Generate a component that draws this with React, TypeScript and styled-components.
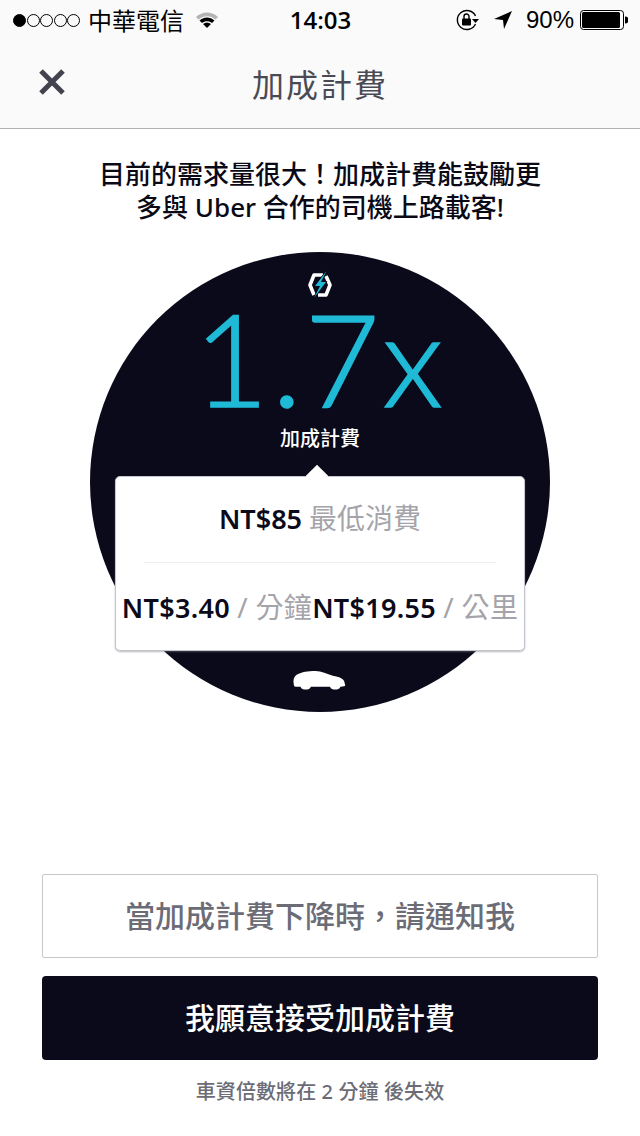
import React from "react";
import styled, { createGlobalStyle } from "styled-components";

const CJK = `"Noto Sans CJK TC", "Noto Sans", sans-serif`;
const LATIN = `"Noto Sans", "Noto Sans CJK TC", sans-serif`;

const Global = createGlobalStyle`
  html, body { margin: 0; padding: 0; background: #fff; }
  body { font-family: ${LATIN}; }
`;

const Page = styled.div`
  width: 640px;
  height: 1136px;
  display: flex;
  flex-direction: column;
  align-items: center;
  overflow: hidden;
  background: #fff;
`;

const Header = styled.header`
  width: 100%;
  height: 129px;
  flex: none;
  box-sizing: border-box;
  background: #fafafa;
  border-bottom: 1px solid #b2b2b2;
  display: flex;
  flex-direction: column;
`;

const StatusBar = styled.div`
  height: 40px;
  padding: 0 12px 0 13px;
  display: grid;
  grid-template-columns: 1fr auto 1fr;
  align-items: center;
  color: #000;
`;

const StatusLeft = styled.div`
  display: flex;
  align-items: center;
`;

const Dots = styled.div`
  display: flex;
  gap: 0.5px;
  margin-right: 8px;
`;

const Dot = styled.span<{ $on?: boolean }>`
  width: 13px;
  height: 13px;
  box-sizing: border-box;
  border-radius: 50%;
  border: 1px solid #000;
  background: ${(p) => (p.$on ? "#000" : "transparent")};
`;

const Carrier = styled.span`
  font: 400 24px/1 ${CJK};
  margin-right: 11px;
`;

const Clock = styled.span`
  font: 600 24px/1 "Open Sans", sans-serif;
`;

const StatusRight = styled.div`
  display: flex;
  align-items: center;
  justify-content: flex-end;
`;

const Percent = styled.span`
  font: 400 24px/1 "Liberation Sans", sans-serif;
  margin: 0 6px 0 13px;
`;

const NavBar = styled.div`
  flex: 1;
  position: relative;
  display: flex;
  align-items: center;
  justify-content: center;
  padding-bottom: 3px;
`;

const CloseButton = styled.div`
  position: absolute;
  left: 38px;
  top: 28px;
  width: 28px;
  height: 28px;
  display: block;
`;

const NavTitle = styled.h1`
  margin: 0;
  font: 400 32px/1 ${CJK};
  letter-spacing: 2px;
  color: #4a4a55;
`;

const Lead = styled.p`
  margin: 29px 0 0;
  width: 480px;
  flex: none;
  text-align: center;
  font: 500 26px/33px ${LATIN};
  color: #0a0a17;
`;

const Disc = styled.section`
  position: relative;
  margin-top: 28px;
  width: 460px;
  height: 460px;
  border-radius: 50%;
  background: #0a0a1a;
  display: flex;
  flex-direction: column;
  align-items: center;
  flex: none;
`;

const SurgeIcon = styled.svg`
  margin-top: 17px;
  width: 26px;
  height: 30px;
  flex: none;
`;

const Multiplier = styled.div`
  margin-top: 8px;
  height: 100px;
  font: 300 129px/100px Lato, sans-serif;
  letter-spacing: 3px;
  color: #1fbad6;
  -webkit-text-stroke: 1.6px #1fbad6;
`;

const DiscLabel = styled.div`
  margin-top: 18px;
  font: 500 20px/26px ${CJK};
  color: #fff;
`;

const Card = styled.div`
  position: absolute;
  left: 25px;
  top: 224px;
  width: 410px;
  height: 175px;
  box-sizing: border-box;
  background: #fff;
  border: 1px solid #c4c5cc;
  border-radius: 5px;
  box-shadow: 0 1px 2px rgba(120, 120, 130, 0.5);
  display: flex;
  flex-direction: column;
  align-items: center;
  &::before {
    content: "";
    position: absolute;
    left: 193px;
    top: -9px;
    width: 16px;
    height: 16px;
    background: #fff;
    transform: rotate(45deg);
  }
`;

const MinRow = styled.div`
  position: relative;
  margin-top: 21px;
  height: 40px;
  font: 600 27px/40px ${LATIN};
  color: #0a0a1a;
`;

const Muted = styled.span`
  font-size: 28px;
  font-weight: 400;
  color: #a4a4aa;
`;

const Divider = styled.hr`
  width: 352px;
  height: 1px;
  border: 0;
  margin: 24px 0 0;
  background: #eeeeef;
`;

const RatesRow = styled.div`
  margin-top: 24px;
  height: 40px;
  display: flex;
  font: 600 27px/40px ${LATIN};
  letter-spacing: 0.3px;
  color: #0a0a1a;
  white-space: nowrap;
`;

const Car = styled.svg`
  position: absolute;
  left: 202px;
  top: 418px;
  width: 55px;
  height: 20px;
`;

const Spacer = styled.div`
  flex: 1;
`;

const NotifyButton = styled.div`
  width: 556px;
  height: 84px;
  flex: none;
  box-sizing: border-box;
  border: 1px solid #c8c8cc;
  border-radius: 2px;
  padding-bottom: 4px;
  display: flex;
  align-items: center;
  justify-content: center;
  font: 500 30px/1 ${CJK};
  color: #6c6c76;
`;

const AcceptButton = styled.div`
  margin-top: 18px;
  width: 556px;
  height: 84px;
  flex: none;
  box-sizing: border-box;
  border-radius: 4px;
  padding-bottom: 4px;
  background: #0a0a1a;
  display: flex;
  align-items: center;
  justify-content: center;
  font: 500 30px/1 ${CJK};
  color: #fff;
`;

const Expiry = styled.div`
  margin: 20px 0 32px;
  height: 24px;
  flex: none;
  font: 500 20px/24px ${LATIN};
  letter-spacing: 0.1px;
  color: #6c6c76;
`;

export default function App() {
  return (
    <Page>
      <Global />
      <Header>
        <StatusBar>
          <StatusLeft>
            <Dots>
              <Dot $on />
              <Dot />
              <Dot />
              <Dot />
              <Dot />
            </Dots>
            <Carrier>中華電信</Carrier>
            <svg width="24" height="18" viewBox="0 0 24 18">
              <path d="M1 6 C7 0 17 0 23 6 L20.5 8.5 C15.5 4 8.5 4 3.5 8.5 Z" fill="#b4b4b4" />
              <path d="M4.5 9.5 C9 5.5 15 5.5 19.5 9.5 L17 12 C14 9.5 10 9.5 7 12 Z" fill="#000" />
              <path d="M8 13 C10.5 11 13.5 11 16 13 L12 17 Z" fill="#000" />
            </svg>
          </StatusLeft>
          <Clock>14:03</Clock>
          <StatusRight>
            <svg width="24" height="22" viewBox="0 0 24 22">
              <path d="M19.5 7 A9.5 9.5 0 1 0 19.5 15" fill="none" stroke="#000" strokeWidth="1.4" />
              <path d="M16 10 L23 10 L19.5 14 Z" fill="#000" />
              <rect x="6" y="9.5" width="9" height="7" rx="1" fill="#000" />
              <path d="M8 10 V7.5 a2.5 2.5 0 0 1 5 0 V10" fill="none" stroke="#000" strokeWidth="1.4" />
            </svg>
            <svg width="20" height="20" viewBox="0 0 20 20" style={{ marginLeft: 13 }}>
              <path d="M19 1 L1 9 L10 10 L11 19 Z" fill="#000" />
            </svg>
            <Percent>90%</Percent>
            <svg width="48" height="20" viewBox="0 0 48 20">
              <rect x="0.5" y="0.5" width="43" height="19" rx="3" fill="none" stroke="#000" />
              <rect x="2" y="2" width="38" height="16" rx="1.5" fill="#000" />
              <path d="M45 6.5 a3.5 3.5 0 0 1 0 7 Z" fill="#000" />
            </svg>
          </StatusRight>
        </StatusBar>
        <NavBar>
          <CloseButton>
            <svg width="28" height="28" viewBox="0 0 28 28">
              <path d="M3 3 L25 25 M25 3 L3 25" stroke="#43434f" strokeWidth="5" fill="none" />
            </svg>
          </CloseButton>
          <NavTitle>加成計費</NavTitle>
        </NavBar>
      </Header>
      <Lead>
        目前的需求量很大！加成計費能鼓勵更
        <br />
        多與 Uber 合作的司機上路載客!
      </Lead>
      <Disc>
        <SurgeIcon viewBox="0 0 26 30">
          <path
            d="M16 6 L7 6 L3 16 L7 26 M11 26 L19 26 L23 16 L19 7"
            fill="none"
            stroke="#fff"
            strokeWidth="3.6"
            strokeLinejoin="round"
          />
          <path
            d="M19.5 2 L8 17 L13 17 L7 29 L19 13 L14 13 Z"
            fill="#1fbad6"
            stroke="#0a0a1a"
            strokeWidth="1.5"
            paintOrder="stroke"
          />
        </SurgeIcon>
        <Multiplier>1.7x</Multiplier>
        <DiscLabel>加成計費</DiscLabel>
        <Card>
          <MinRow>
            NT$85 <Muted>最低消費</Muted>
          </MinRow>
          <Divider />
          <RatesRow>
            <span>
              NT$3.40 <Muted>/ 分鐘</Muted>
            </span>
            <span>
              NT$19.55 <Muted>/ 公里</Muted>
            </span>
          </RatesRow>
        </Card>
        <Car viewBox="0 0 56 21">
          <path d="M1 15 C0 11 1 7 4 5 C10 2 15 1 24 1 C30 1 36 4 42 6 C49 7 53 9 54 12 L55 16 C55 17 53 17.5 50 17.5 C49 20 47 20.5 44.5 20.5 C42 20.5 40 20 39 17.5 L19 17.5 C18 20 16 20.5 13.5 20.5 C11 20.5 9 20 8 17.5 L3 17.5 C2 17.5 1 17 1 15 Z" fill="#fff" />
        </Car>
      </Disc>
      <Spacer />
      <NotifyButton>當加成計費下降時，請通知我</NotifyButton>
      <AcceptButton>我願意接受加成計費</AcceptButton>
      <Expiry>車資倍數將在 2 分鐘 後失效</Expiry>
    </Page>
  );
}
